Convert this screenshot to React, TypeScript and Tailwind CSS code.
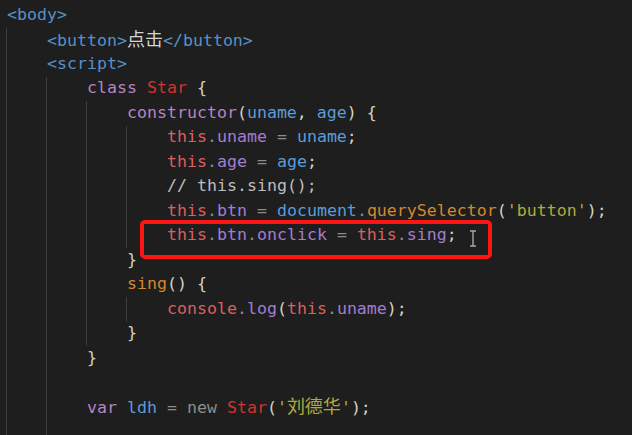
import React from "react"

type Tok = [string, string]

const c = {
  tag: "text-[#5690c8]",
  kw: "text-[#b584c1]",
  cls: "text-[#d0342c]",
  pn: "text-[#d6d2c2]",
  v: "text-[#5c9bd6]",
  th: "text-[#dd5e5e]",
  pr: "text-[#a27ccf]",
  op: "text-[#8c8c8c]",
  cm: "text-[#bdbdbd]",
  fn: "text-[#d4872f]",
  str: "text-[#adab3c]",
  tx: "text-[#d4d4d4]",
  cjk: "text-[18px]",
}

const lines: { guides: number; toks: Tok[] }[] = [
  { guides: 0, toks: [["<body>", c.tag]] },
  { guides: 1, toks: [["<button>", c.tag], ["点击", c.tx + " " + c.cjk], ["</button>", c.tag]] },
  { guides: 1, toks: [["<script>", c.tag]] },
  { guides: 2, toks: [["class ", c.kw], ["Star", c.cls], [" {", c.pn]] },
  {
    guides: 3,
    toks: [["constructor", c.kw], ["(", c.pn], ["uname", c.v], [", ", c.pn], ["age", c.v], [") {", c.pn]],
  },
  {
    guides: 4,
    toks: [["this", c.th], [".", c.op], ["uname", c.pr], [" = ", c.op], ["uname", c.v], [";", c.pn]],
  },
  {
    guides: 4,
    toks: [["this", c.th], [".", c.op], ["age", c.pr], [" = ", c.op], ["age", c.v], [";", c.pn]],
  },
  { guides: 4, toks: [["// this.sing();", c.cm]] },
  {
    guides: 4,
    toks: [
      ["this", c.th],
      [".", c.op],
      ["btn", c.pr],
      [" = ", c.op],
      ["document", c.v],
      [".", c.op],
      ["querySelector", c.fn],
      ["(", c.pn],
      ["'button'", c.str],
      [");", c.pn],
    ],
  },
  {
    guides: 4,
    toks: [
      ["this", c.th],
      [".", c.op],
      ["btn", c.pr],
      [".", c.op],
      ["onclick", c.pr],
      [" = ", c.op],
      ["this", c.th],
      [".", c.op],
      ["sing", c.pr],
      [";", c.pn],
    ],
  },
  { guides: 3, toks: [["}", c.pn]] },
  { guides: 3, toks: [["sing", c.fn], ["() {", c.pn]] },
  {
    guides: 4,
    toks: [["console", c.th], [".", c.op], ["log", c.pr], ["(", c.pn], ["this", c.th], [".", c.op], ["uname", c.pr], [");", c.pn]],
  },
  { guides: 3, toks: [["}", c.pn]] },
  { guides: 2, toks: [["}", c.pn]] },
  { guides: 2, toks: [] },
  {
    guides: 2,
    toks: [
      ["var ", c.kw],
      ["ldh", c.v],
      [" = ", c.op],
      ["new ", c.op],
      ["Star", c.cls],
      ["(", c.pn],
      ["'", c.str],
      ["刘德华", c.str + " " + c.cjk],
      ["'", c.str],
      [");", c.pn],
    ],
  },
  { guides: 2, toks: [] },
]

function CodeLine({ guides, toks }: { guides: number; toks: Tok[] }) {
  return (
    <div className="flex h-[24.5px] items-center whitespace-pre pl-[6px]">
      {Array.from({ length: guides }).map((_, i) => (
        <span key={i} className="h-full w-[40px] shrink-0 border-l border-[#3d3d3d]" />
      ))}
      <span className="pl-px">
        {toks.map(([t, cls], i) => (
          <span key={i} className={cls}>
            {t}
          </span>
        ))}
      </span>
    </div>
  )
}

export default function App() {
  return (
    <div
      className="relative h-[435px] w-[632px] overflow-hidden bg-[#1e1e1e] pt-[3px] text-[16.6px]"
      style={{ fontFamily: '"DejaVu Sans Mono", "Noto Sans CJK SC", monospace' }}
    >
      {lines.map((l, i) => (
        <CodeLine key={i} guides={l.guides} toks={l.toks} />
      ))}

      {/* highlight box drawn over the code */}
      <div className="absolute left-[140px] top-[220px] h-[39px] w-[352px] rounded-[5px] border-4 border-[#ff1414]" />

      <svg className="absolute left-[468px] top-[230px]" width="10" height="17" viewBox="0 0 10 17">
        <path d="M2 1h6M5 1v15M2 16h6" stroke="#a8a8a8" strokeWidth="1.4" fill="none" />
      </svg>
    </div>
  )
}
